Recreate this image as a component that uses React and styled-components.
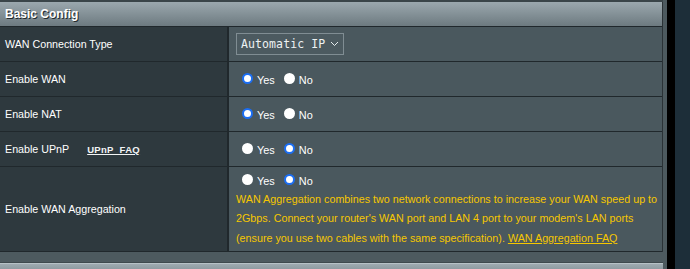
import React from 'react';
import styled, { createGlobalStyle } from 'styled-components';

const GlobalStyle = createGlobalStyle`
  html, body {
    margin: 0;
    padding: 0;
    background: #1d2e39;
  }
  body {
    font-family: "Liberation Sans", Arial, sans-serif;
  }
`;

const rows = [
  { label: 'WAN Connection Type', kind: 'select' },
  { label: 'Enable WAN', kind: 'radio', value: 'yes' },
  { label: 'Enable NAT', kind: 'radio', value: 'yes' },
  { label: 'Enable UPnP', kind: 'radio', value: 'no', link: 'UPnP\u00a0\u00a0FAQ' },
];

function RadioPair({ name, value }) {
  return (
    <RadioGroup>
      <RadioLabel>
        <Radio type="radio" name={name} defaultChecked={value === 'yes'} />
        Yes
      </RadioLabel>
      <RadioLabel>
        <Radio type="radio" name={name} defaultChecked={value === 'no'} />
        No
      </RadioLabel>
    </RadioGroup>
  );
}

function App() {
  return (
    <Page>
      <GlobalStyle />
      <Panel>
        <Table>
          <Header>Basic Config</Header>
          {rows.map((r, i) => (
            <Row key={r.label}>
              <Label>
                {r.label}
                {r.link && <FaqLink>{r.link}</FaqLink>}
              </Label>
              <Value>
                {r.kind === 'select' ? (
                  <Select>
                    Automatic IP
                    <svg width="9" height="6" viewBox="0 0 9 6">
                      <path d="M1 1 L4.5 4.5 L8 1" fill="none" stroke="#e6ecee" strokeWidth="1" />
                    </svg>
                  </Select>
                ) : (
                  <RadioPair name={'r' + i} value={r.value} />
                )}
              </Value>
            </Row>
          ))}
          <Row tall>
            <Label>Enable WAN Aggregation</Label>
            <Value stacked>
              <RadioPair name="agg" value="no" />
              <Hint>
                WAN Aggregation combines two network connections to increase your WAN speed up to
                2Gbps. Connect your router's WAN port and LAN 4 port to your modem's LAN ports
                (ensure you use two cables with the same specification).{' '}
                <HintLink>WAN Aggregation FAQ</HintLink>
              </Hint>
            </Value>
          </Row>
        </Table>
        <NextHeader />
      </Panel>
      <Scrollbar />
    </Page>
  );
}

const Page = styled.div`
  display: flex;
  height: 269px;
  overflow: hidden;
`;

const Panel = styled.div`
  width: 663px;
  background: #4d5a5f;
  border-right: 4px solid #4d5a5f;
  padding-top: 2px;
  box-shadow: inset 0 2px 0 #3a4549;
  display: flex;
  flex-direction: column;
  gap: 10px;
`;

const Scrollbar = styled.div`
  width: 8px;
  background: #000;
`;

const Table = styled.div`
  display: flex;
  flex-direction: column;
  border-right: 1px solid #2a3236;
`;

const Header = styled.div`
  height: 24px;
  display: flex;
  align-items: center;
  padding-left: 5px;
  background: linear-gradient(to bottom, #9ba8ae, #6d7a80);
  color: #fff;
  font-weight: bold;
  font-size: 12px;
  text-shadow: 1px 1px 0 #222a2e;
  border-bottom: 1px solid #20282c;
`;

const NextHeader = styled.div`
  height: 8px;
  background: linear-gradient(to bottom, #a1adb3, #8e9ba1);
  border-top: 1px solid #3e494d;
  box-shadow: inset 0 1px 0 #b6c1c6;
`;

const Row = styled.div`
  display: grid;
  grid-template-columns: 229px 1fr;
  height: ${(p) => (p.tall ? '84px' : '34px')};
  border-bottom: 1px solid #20282c;
`;

const Label = styled.div`
  display: flex;
  align-items: center;
  padding-left: 5px;
  background: #2e393e;
  border-right: 2px solid #20282c;
  color: #fff;
  font-size: 10.7px;
`;

const FaqLink = styled.span`
  margin-left: 18px;
  font-size: 9.5px;
  font-weight: bold;
  letter-spacing: 0.3px;
  text-decoration: underline;
  color: #f2f4f5;
`;

const Value = styled.div`
  display: flex;
  flex-direction: ${(p) => (p.stacked ? 'column' : 'row')};
  align-items: ${(p) => (p.stacked ? 'flex-start' : 'center')};
  padding: ${(p) => (p.stacked ? '6px 0 0 7px' : '0 0 0 7px')};
  background: #4a585e;
`;

const Select = styled.div`
  display: flex;
  align-items: center;
  gap: 5px;
  height: 20px;
  padding: 0 4px;
  border: 1px solid #808d93;
  background: #4c5a60;
  color: #eef2f3;
  font-family: "DejaVu Sans Mono", "Liberation Mono", monospace;
  font-size: 11.5px;
  letter-spacing: 0.1px;
`;

const RadioGroup = styled.div`
  display: flex;
  align-items: center;
  gap: 9px;
  padding-left: 6px;
`;

const RadioLabel = styled.label`
  display: flex;
  align-items: center;
  gap: 4px;
  color: #fff;
  font-size: 10.9px;
  padding-top: 1px;
`;

const Radio = styled.input`
  appearance: none;
  margin: 0 0 2px 0;
  width: 11px;
  height: 11px;
  border-radius: 50%;
  background: #fff;
  box-sizing: border-box;

  &:checked {
    border: 2px solid #1b6ef3;
    background: #fff;
  }
`;

const Hint = styled.p`
  margin: 3px 0 0 0;
  color: #f6c700;
  font-size: 10.75px;
  line-height: 19.3px;
  max-width: 426px;
`;

const HintLink = styled.span`
  text-decoration: underline;
`;

export default App;
